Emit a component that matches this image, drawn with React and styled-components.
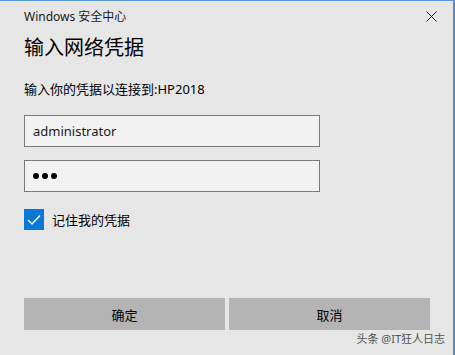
import styled, { createGlobalStyle } from "styled-components";

const Global = createGlobalStyle`
  html, body { margin: 0; padding: 0; background: #e6e6e6; }
  body { font-family: "Noto Sans", "Noto Sans CJK SC", sans-serif; }
`

const Dialog = styled.div`
  box-sizing: border-box;
  width: 455px;
  height: 355px;
  background: #e6e6e6;
  border-top: 1px solid #5a9ad8;
  border-right: 2px solid #4a8fd6;
  display: flex;
  flex-direction: column;
  padding: 0 0 0 24px;
  color: #000;
`
const TitleBar = styled.div`
  display: flex;
  align-items: center;
  justify-content: space-between;
  height: 30px;
  padding-right: 16px;
`
const AppName = styled.span`
  font-size: 12px;
  color: #1a1a1a;
`
const Close = styled.svg`
  width: 11px;
  height: 11px;
`
const Heading = styled.h1`
  margin: 3px 0 0;
  font-size: 20px;
  font-weight: 400;
  line-height: 28px;
`
const Sub = styled.p`
  margin: 18px 0 0;
  font-size: 13px;
  line-height: 18px;
`
const Field = styled.div`
  box-sizing: border-box;
  width: 296px;
  height: 32px;
  margin-top: ${p => p.mt}px;
  background: #f2f2f2;
  border: 1px solid #7a7a7a;
  display: flex;
  align-items: center;
  gap: 3px;
  padding-left: 8px;
  font-size: 13px;
  color: #1a1a1a;
`
const Dot = styled.span`
  width: 6px;
  height: 6px;
  border-radius: 50%;
  background: #000;
`
const CheckRow = styled.div`
  display: flex;
  align-items: center;
  gap: 8px;
  margin-top: 17px;
  font-size: 13px;
`
const Box = styled.span`
  width: 20px;
  height: 21px;
  background: #0a78d7;
  display: flex;
  align-items: center;
  justify-content: center;
`
const Buttons = styled.div`
  display: flex;
  gap: 4px;
  margin-top: auto;
  width: 406px;
`
const Button = styled.div`
  flex: 1;
  height: 32px;
  background: #b4b4b4;
  display: flex;
  align-items: center;
  justify-content: center;
  font-size: 13px;
`
const Watermark = styled.div`
  align-self: flex-end;
  margin: 2px 8px 9px 0;
  font-size: 11px;
  color: #555;
  line-height: 14px;
`

export default function App() {
  return (
    <>
      <Global />
      <Dialog>
        <TitleBar>
          <AppName>Windows 安全中心</AppName>
          <Close viewBox="0 0 11 11">
            <path d="M0.5 0.5 L10.5 10.5 M10.5 0.5 L0.5 10.5" stroke="#222" strokeWidth="1" fill="none" />
          </Close>
        </TitleBar>
        <Heading>输入网络凭据</Heading>
        <Sub>输入你的凭据以连接到:HP2018</Sub>
        <Field mt={17}>administrator</Field>
        <Field mt={13}><Dot /><Dot /><Dot /></Field>
        <CheckRow>
          <Box>
            <svg width="14" height="12" viewBox="0 0 14 12">
              <path d="M1 6 L5 10 L13 1.5" stroke="#fff" strokeWidth="1.4" fill="none" />
            </svg>
          </Box>
          记住我的凭据
        </CheckRow>
        <Buttons>
          <Button>确定</Button>
          <Button>取消</Button>
        </Buttons>
        <Watermark>头条 @IT狂人日志</Watermark>
      </Dialog>
    </>
  );
}
